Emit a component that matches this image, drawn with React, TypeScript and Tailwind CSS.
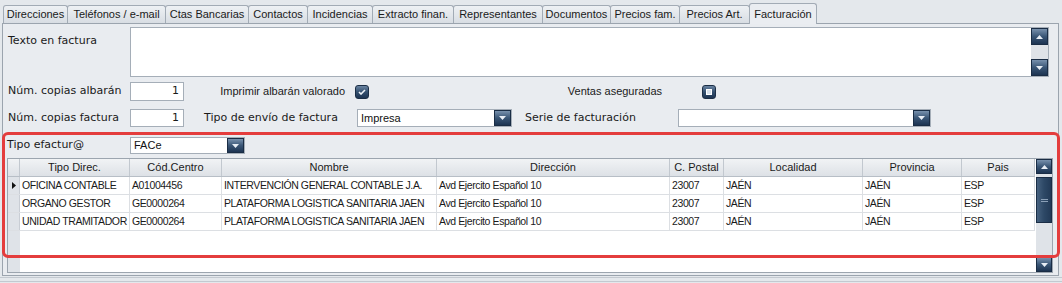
import React from 'react';

const TABS = [
  { label: 'Direcciones', w: 65 },
  { label: 'Teléfonos / e-mail', w: 99 },
  { label: 'Ctas Bancarias', w: 84 },
  { label: 'Contactos', w: 60 },
  { label: 'Incidencias', w: 66 },
  { label: 'Extracto finan.', w: 82 },
  { label: 'Representantes', w: 90 },
  { label: 'Documentos', w: 69 },
  { label: 'Precios fam.', w: 70 },
  { label: 'Precios Art.', w: 71 },
  { label: 'Facturación', w: 68, active: true },
];

const COLUMNS = [
  { title: 'Tipo Direc.', w: 110 },
  { title: 'Cód.Centro', w: 92 },
  { title: 'Nombre', w: 215 },
  { title: 'Dirección', w: 233 },
  { title: 'C. Postal', w: 54 },
  { title: 'Localidad', w: 139 },
  { title: 'Provincia', w: 99 },
  { title: 'Pais', w: 73 },
];

const ROWS = [
  ['OFICINA CONTABLE', 'A01004456', 'INTERVENCIÓN GENERAL CONTABLE J.A.', 'Avd Ejercito Español 10', '23007', 'JAÉN', 'JAÉN', 'ESP'],
  ['ORGANO GESTOR', 'GE0000264', 'PLATAFORMA LOGISTICA SANITARIA JAEN', 'Avd Ejercito Español 10', '23007', 'JAÉN', 'JAÉN', 'ESP'],
  ['UNIDAD TRAMITADOR', 'GE0000264', 'PLATAFORMA LOGISTICA SANITARIA JAEN', 'Avd Ejercito Español 10', '23007', 'JAÉN', 'JAÉN', 'ESP'],
];

const tahoma = "font-['Liberation_Sans',Arial,sans-serif]";
const verdana = "font-['DejaVu_Sans',Verdana,sans-serif]";

// navy button with a little triangle, used by combos and scroll bars
const NavyButton: React.FC<{ dir: 'up' | 'down'; className?: string }> = ({ dir, className = '' }) => (
  <div
    className={`flex items-center justify-center bg-gradient-to-b from-[#7891ad] via-[#3a5676] to-[#1d3452] border border-[#1a2d45] ${className}`}
  >
    <svg width="7" height="4" viewBox="0 0 7 4">
      {dir === 'down' ? <path d="M0 0 H7 L3.5 4 Z" fill="#e8eef5" /> : <path d="M0 4 H7 L3.5 0 Z" fill="#e8eef5" />}
    </svg>
  </div>
);

const Combo: React.FC<{ w: string; value?: string; h?: string }> = ({ w, value = '', h = 'h-[18px]' }) => (
  <div className={`flex ${w} ${h} border border-[#a5aeb8] bg-white`}>
    <span className={`flex-1 pl-[3px] text-[11px] leading-none flex items-center text-[#111] ${tahoma}`}>{value}</span>
    <NavyButton dir="down" className="w-[17px] h-full" />
  </div>
);

const CheckBox: React.FC<{ checked?: boolean }> = ({ checked }) => (
  <div className="w-[14px] h-[14px] rounded-[3px] border border-[#1b2e46] bg-gradient-to-b from-[#6a84a2] via-[#34506f] to-[#1e3553] flex items-center justify-center">
    {checked ? (
      <svg width="8" height="6" viewBox="0 0 8 6">
        <path d="M1 3 L3 5 L7 1" stroke="#eef3f8" strokeWidth="1.6" fill="none" />
      </svg>
    ) : (
      <div className="w-[6px] h-[6px] border-[1.5px] border-white bg-[#d9e2ec]" />
    )}
  </div>
);

export default function App() {
  return (
    <div className={`relative w-[1062px] h-[283px] overflow-hidden bg-[#e4e8ec] text-[#1a1a1a] ${tahoma}`}>
      {/* tab strip */}
      <div className="flex items-end h-[23px] pl-[3px]">
        {TABS.map((t, i) => (
          <div
            key={t.label}
            style={{ width: t.w }}
            className={`relative flex items-center justify-center text-[11px] border border-[#a2abb5] rounded-t-[3px] ${
              i > 0 ? '-ml-px' : ''
            } ${
              t.active
                ? 'h-[21px] z-10 -mb-px border-b-0 bg-[#eaedf1]'
                : 'h-[18px] border-b-0 bg-gradient-to-b from-[#eef1f4] to-[#d8dde3]'
            }`}
          >
            {t.label}
          </div>
        ))}
      </div>

      {/* panel */}
      <div className="ml-[2px] w-[1057px] h-[253px] border border-[#9ba4ae] bg-[#e9ecf0]">
        {/* Texto en factura */}
        <div className="flex mt-[3px]">
          <div className={`w-[127px] pl-[5px] pt-[6px] text-[11px] ${verdana}`}>Texto en factura</div>
          <div className="flex w-[919px] h-[50px] border border-[#a5aeb8] bg-white">
            <div className="flex-1" />
            <div className="w-[17px] flex flex-col justify-between bg-[#dfe3e8]">
              <NavyButton dir="up" className="h-[17px]" />
              <NavyButton dir="down" className="h-[17px]" />
            </div>
          </div>
        </div>

        {/* row 1 */}
        <div className="flex items-center mt-[5px] h-[19px]">
          <div className={`w-[127px] pl-[5px] text-[11px] ${verdana}`}>Núm. copias albarán</div>
          <div className={`w-[54px] h-[19px] border border-[#a5aeb8] bg-white flex items-center justify-end pr-[4px] text-[11px] ${verdana}`}>1</div>
          <div className="w-[171px] flex justify-end pr-[10px] text-[11px]">Imprimir albarán valorado</div>
          <CheckBox checked />
          <div className="w-[333px] flex justify-end pr-[40px] text-[11px]">Ventas aseguradas</div>
          <CheckBox />
        </div>

        {/* row 2 */}
        <div className="flex items-center mt-[8px] h-[18px]">
          <div className={`w-[127px] pl-[5px] text-[11px] ${verdana}`}>Núm. copias factura</div>
          <div className={`w-[54px] h-[18px] border border-[#a5aeb8] bg-white flex items-center justify-end pr-[4px] text-[11px] ${verdana}`}>1</div>
          <div className={`w-[173px] pl-[20px] text-[11px] ${verdana}`}>Tipo de envío de factura</div>
          <Combo w="w-[155px]" value="Impresa" />
          <div className={`w-[166px] pl-[13px] text-[11px] ${verdana}`}>Serie de facturación</div>
          <Combo w="w-[253px]" />
        </div>

        {/* efactura */}
        <div className="flex items-center mt-[10px] h-[17px]">
          <div className={`w-[127px] pl-[4px] text-[11px] ${verdana}`}>Tipo efactur@</div>
          <Combo w="w-[115px]" h="h-[17px]" value="FACe" />
        </div>

        {/* grid */}
        <div className="flex ml-[4px] mt-[4px] w-[1046px] h-[115px] border border-[#9ca5af] bg-white">
          <div className="w-[1027px] flex flex-col">
            <div className="flex h-[18px] border-b border-[#b7bec6] bg-gradient-to-b from-[#f1f3f5] to-[#dde1e6]">
              <div className="w-[12px] border-r border-[#c2c8cf]" />
              {COLUMNS.map((c) => (
                <div
                  key={c.title}
                  style={{ width: c.w }}
                  className="shrink-0 flex items-center justify-center text-[11px] border-r border-[#c2c8cf]"
                >
                  {c.title}
                </div>
              ))}
            </div>
            {ROWS.map((r, ri) => (
              <div key={ri} className="flex h-[18px] border-b border-[#dcdfe3]">
                <div className="w-[12px] flex items-center justify-center bg-[#dfe3e8] border-r border-[#c9ced5]">
                  {ri === 0 && (
                    <svg width="4" height="7" viewBox="0 0 4 7">
                      <path d="M0 0 L4 3.5 L0 7 Z" fill="#111" />
                    </svg>
                  )}
                </div>
                {r.map((v, ci) => (
                  <div
                    key={ci}
                    style={{ width: COLUMNS[ci].w }}
                    className="shrink-0 overflow-hidden whitespace-nowrap flex items-center pl-[2px] text-[10.5px] tracking-[-0.4px] border-r border-[#dcdfe3]"
                  >
                    {v}
                  </div>
                ))}
              </div>
            ))}
            <div className="flex flex-1">
              <div className="w-[12px] bg-[#dfe3e8]" />
            </div>
          </div>
          <div className="w-[17px] ml-[1px] flex flex-col bg-[#dfe3e8]">
            <NavyButton dir="up" className="h-[15px]" />
            <div className="mt-[3px] h-[46px] bg-gradient-to-r from-[#46617f] via-[#2d4866] to-[#223a57] border border-[#1a2d45] flex items-center justify-center">
              <div className="w-[7px] h-[3px] border-y border-[#8ba0b8]" />
            </div>
            <div className="flex-1" />
            <NavyButton dir="down" className="h-[15px]" />
          </div>
        </div>
      </div>

      {/* bottom edge strips */}
      <div className="mt-[1px] h-px bg-[#c3c9d0]" />
      <div className="mt-[3px] h-px bg-[#c3c9d0]" />

      {/* red highlight annotation */}
      <div className="absolute left-[2px] top-[132px] w-[1058px] h-[126px] border-[3px] border-[#e43d3d] rounded-[6px] pointer-events-none" />
    </div>
  );
}
